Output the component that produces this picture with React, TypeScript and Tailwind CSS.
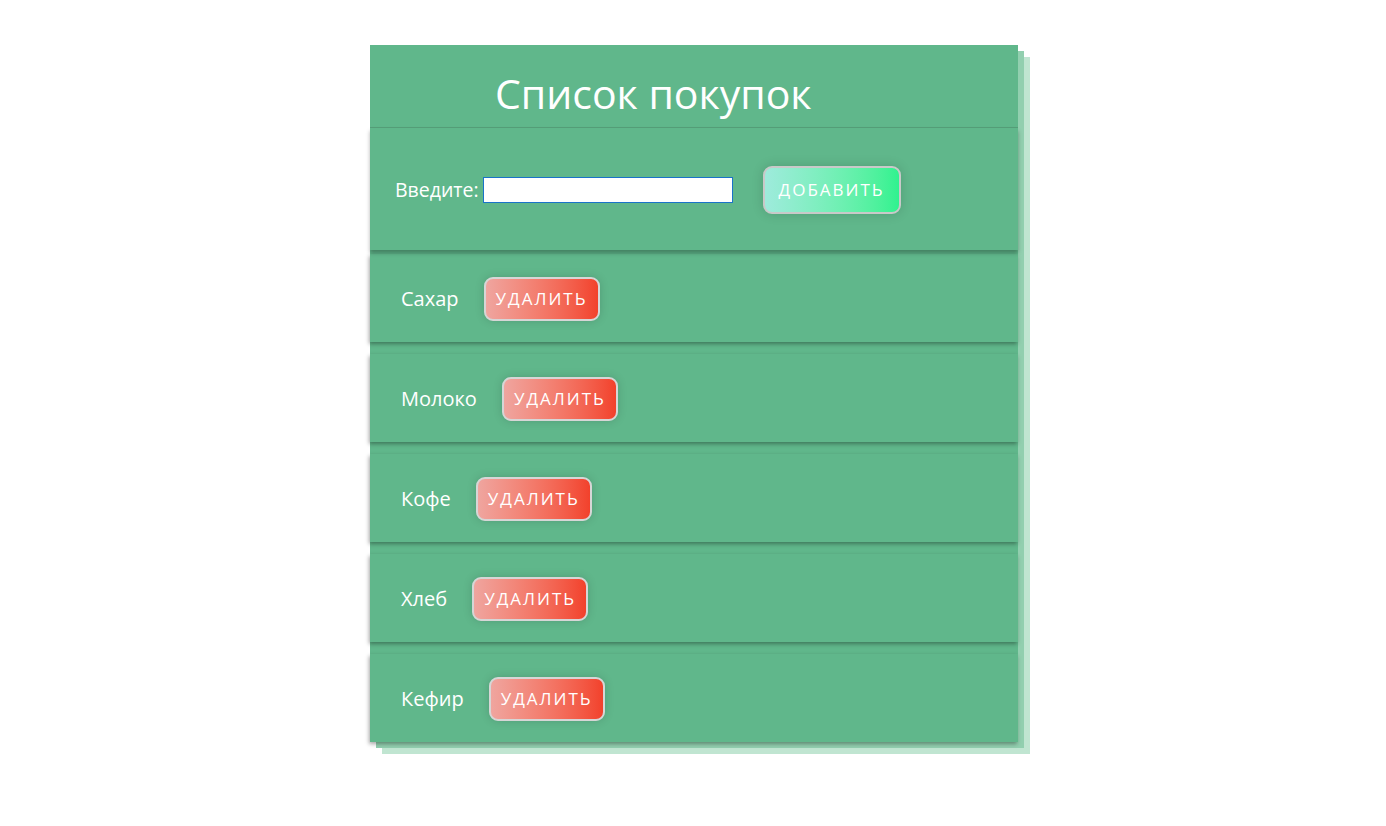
import React from "react";

const items = ["Сахар", "Молоко", "Кофе", "Хлеб", "Кефир"];

export default function App() {
  return (
    <div className="min-h-[826px] w-full bg-white pt-[45px]" style={{ fontFamily: '"Open Sans", "Liberation Sans", sans-serif' }}>
      <div className="mx-auto w-[648px] translate-x-[1px] bg-[#60b78b] shadow-[6px_6px_0_#92cfaf,12px_12px_0_#c0e5d1]">
        <div className="flex h-[83px] items-center border-b border-[#559f79] pl-[125px] pt-[14px]">
          <h1 className="text-[41px] font-normal leading-none text-white">Список покупок</h1>
        </div>
        <div className="flex h-[122px] items-center pl-[25px] pt-[2px] shadow-[0_3px_4px_rgba(0,0,0,0.3)]">
          <span className="text-[19.5px] text-white">Введите:</span>
          <input className="ml-[4px] h-[26px] w-[250px] border border-[#1a73c9] bg-white outline-none" />
          <button className="ml-[30px] h-[48px] w-[138px] rounded-[9px] border-2 border-[#c9c9c9] bg-gradient-to-r from-[#9eebdc] to-[#2ff28f] text-[17px] tracking-[2px] text-white shadow-[0_0_12px_rgba(0,0,0,0.15)]">
            ДОБАВИТЬ
          </button>
        </div>
        <div className="flex flex-col gap-[12px] pt-[4px]">
          {items.map((it) => (
            <div key={it} className="flex h-[88px] items-center pl-[31px] pt-[2px] shadow-[-1px_2px_4px_rgba(0,0,0,0.35)]">
              <span className="text-[20px] text-white">{it}</span>
              <button className="ml-[25px] h-[44px] w-[116px] rounded-[9px] border-2 border-[#d6d6d6] bg-gradient-to-r from-[#efa59f] to-[#f2412b] text-[17px] tracking-[2px] text-white shadow-[0_0_10px_rgba(0,0,0,0.15)]">
                УДАЛИТЬ
              </button>
            </div>
          ))}
        </div>
      </div>
    </div>
  );
}
